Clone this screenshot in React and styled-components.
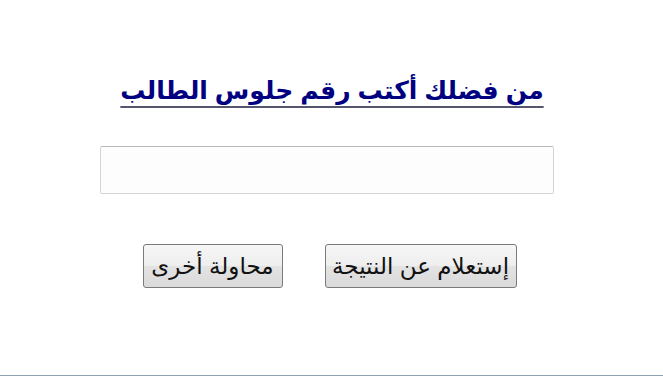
import React from "react";
import styled, { createGlobalStyle } from "styled-components";

const Global = createGlobalStyle`
  html, body { margin: 0; padding: 0; background: #fff; }
  body { font-family: "Liberation Sans", "DejaVu Sans", sans-serif; }
`;

const Page = styled.div`
  height: 376px;
  box-sizing: border-box;
  border-bottom: 1px solid #8fa3b0;
  display: flex;
  flex-direction: column;
  align-items: center;
  padding-top: 70px;
`;

const Heading = styled.a`
  font-family: "Liberation Sans", "DejaVu Sans", sans-serif;
  font-weight: bold;
  font-size: 25px;
  color: #000080;
  text-decoration: underline;
  text-decoration-color: #55556e;
  text-decoration-thickness: 2px;
  text-underline-offset: 7px;
  line-height: 40px;
  margin-left: 1px;
`;

const Field = styled.input`
  margin-top: 36px;
  width: 454px;
  height: 48px;
  box-sizing: border-box;
  border: 1px solid #d4d4d4;
  border-top-color: #b8b8b8;
  border-radius: 2px;
  background: #fdfdfd;
  margin-right: 9px;
  outline: none;
`;

const Buttons = styled.div`
  margin-top: 50px;
  display: flex;
  gap: 42px;
  margin-right: 4px;
`;

const Button = styled.button`
  font-family: "Liberation Sans", "DejaVu Sans", sans-serif;
  font-size: 23px;
  color: #111;
  width: ${(p) => p.$w}px;
  height: 44px;
  box-sizing: border-box;
  border: 1px solid #7a7a7a;
  border-radius: 3px;
  background: linear-gradient(#f6f6f6 0%, #eeeeee 50%, #e3e3e3 51%, #dadada 100%);
  padding: 0;
  cursor: pointer;
`;

export default function App() {
  return (
    <>
      <Global />
      <Page dir="rtl">
        <Heading>من فضلك أكتب رقم جلوس الطالب</Heading>
        <Field type="text" />
        <Buttons>
          <Button $w={192}>إستعلام عن النتيجة</Button>
          <Button $w={140}>محاولة أخرى</Button>
        </Buttons>
      </Page>
    </>
  );
}
